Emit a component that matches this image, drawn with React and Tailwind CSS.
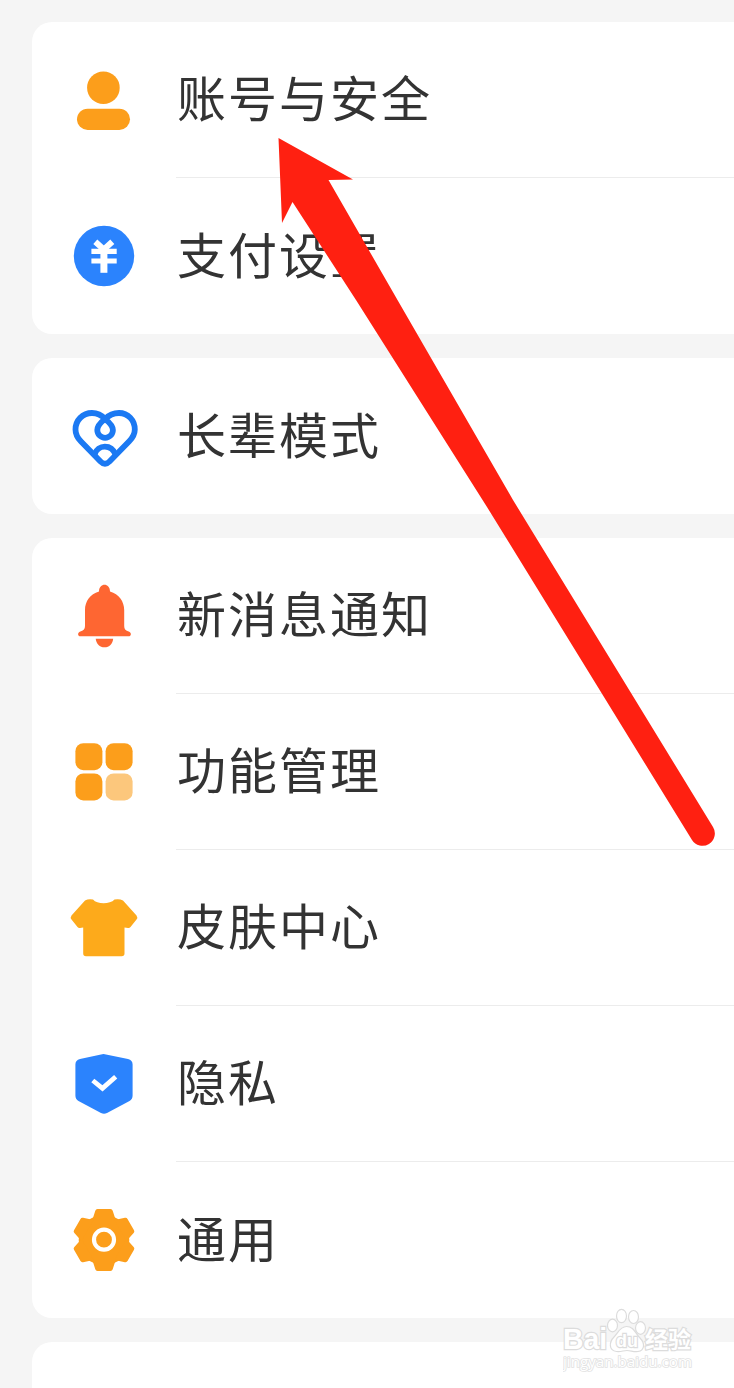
import React from 'react';

const UserIcon = () => (
  <svg viewBox="0 0 72 72" className="w-18 h-18 shrink-0" fill="#fc9e1b">
    <circle cx="35.4" cy="23.8" r="16.3" />
    <rect x="9" y="44.7" width="53" height="21.2" rx="10.6" />
  </svg>
);

const PayIcon = () => (
  <svg viewBox="0 0 72 72" className="w-18 h-18 shrink-0" fill="none">
    <circle cx="36" cy="36" r="30.2" fill="#2b83fd" />
    <path d="M27.3 21.8l8.500 7.700 8.500-7.700" stroke="#fff" strokeWidth="6" />
    <path d="M23.4 31.4h25.300M23.4 41h25.300" stroke="#fff" strokeWidth="5.2" />
    <path d="M35.9 27v25.8" stroke="#fff" strokeWidth="7" />
  </svg>
);

const HeartIcon = () => (
  <svg viewBox="0 0 72 72" className="w-18 h-18 shrink-0" fill="none" stroke="#1b79f3" strokeWidth="5.8" strokeLinecap="round" strokeLinejoin="round">
    <path d="M37 19C33 14.500 28.500 13 24 13C14.500 13 7.500 20.500 7.500 29.500C7.500 35 10 38.500 13 41.500L32.500 61.500Q37 66 41.500 61.500L61 41.500C64.500 38 66.800 34.500 66.800 29.500C66.800 20 60 13 51 13C46 13 41.500 14.500 37 19Z" />
    <path d="M37 19C32.500 22.500 29.300 26 29.300 30a7.800 7.800 0 0 0 15.600 0C44.900 26 41.500 22.500 37 19Z" />
    <path d="M26.500 54.500C30 44 43.500 44 47.500 54.500" />
  </svg>
);

const BellIcon = () => (
  <svg viewBox="0 0 72 72" className="w-18 h-18 shrink-0" fill="#fe6632">
    <path d="M31 11.500C31 2.500 42 2.500 42 11.500C51 14 56.200 21.500 56.200 30V46C56.200 49 57.500 50.500 60 51.200C64 52.300 63.500 56.300 60.500 56.300H12.500C9.500 56.300 9 52.300 13 51.200C15.500 50.500 17 49 17 46V30C17 21.500 22 14 31 11.500Z" />
    <path d="M27.700 58.700H45.200C44.500 64 41.500 67.300 36.500 67.300C31.500 67.300 28.400 64 27.700 58.700Z" />
  </svg>
);

const GridIcon = () => (
  <svg viewBox="0 0 72 72" className="w-18 h-18 shrink-0" fill="#fc9e1b">
    <rect x="7.400" y="7.200" width="27" height="27" rx="8" />
    <rect x="37.600" y="7.200" width="27" height="27" rx="8" />
    <rect x="7.400" y="37.400" width="27" height="27" rx="8" />
    <rect x="37.600" y="37.400" width="27" height="27" rx="8" fill="#fcc77c" />
  </svg>
);

const ShirtIcon = () => (
  <svg viewBox="0 0 72 72" className="w-18 h-18 shrink-0" fill="#fdaa1b">
    <path d="M17 8.500Q20.500 6.500 25 7.500C29 12.500 42 12.500 46.500 7.500Q51.500 6.500 55 8.500L68.500 23.500Q70 25.500 68.500 27.500L62.500 35Q61.500 36.200 60 35.900L56.500 35.500V61.500Q56.500 64.300 53.700 64.300H18Q15.200 64.300 15.200 61.500V35.500L12 35.900Q10.500 36.200 9.500 35L3.500 27.500Q2 25.500 3.500 23.500Z" />
  </svg>
);

const ShieldIcon = () => (
  <svg viewBox="0 0 72 72" className="w-18 h-18 shrink-0" fill="none">
    <path d="M33 6.500Q35.500 5.700 38 6.500L60 11Q64.600 12.300 64.600 16.500V47.500Q64.600 51 61.500 53L39 65Q36 66.500 33 65L10.500 53Q7.400 51 7.400 47.500V16.500Q7.400 12.300 12 11Z" fill="#2b83fd" />
    <path d="M24.800 32.500l9.700 7.900 13.200-11.600" stroke="#fff" strokeWidth="4.800" />
  </svg>
);

const TEETH = [0, 60, 120, 180, 240, 300];

const GearIcon = () => (
  <svg viewBox="0 0 72 72" className="w-18 h-18 shrink-0" fill="#fc9e1b">
    <circle cx="36" cy="36" r="25.300" />
    {TEETH.map((deg) => (
      <path key={deg} transform={`rotate(${deg} 36 36)`} d="M24 17L27.300 6.800Q27.800 5.100 29.500 5.100H42.500Q44.200 5.100 44.700 6.800L48 17Z" />
    ))}
    <circle cx="36" cy="35.700" r="10" fill="none" stroke="#fff" strokeWidth="4.200" />
  </svg>
);

const GROUPS = [
  [
    { label: '账号与安全', Icon: UserIcon },
    { label: '支付设置', Icon: PayIcon },
  ],
  [{ label: '长辈模式', Icon: HeartIcon }],
  [
    { label: '新消息通知', Icon: BellIcon },
    { label: '功能管理', Icon: GridIcon },
    { label: '皮肤中心', Icon: ShirtIcon },
    { label: '隐私', Icon: ShieldIcon },
    { label: '通用', Icon: GearIcon },
  ],
];

const SettingRow = ({ label, Icon, last }) => (
  <div className="flex items-center h-39 pl-9">
    <Icon />
    <div className={`flex items-center flex-1 h-full ml-9 pl-px pb-2 ${last ? '' : 'border-b border-[#ececec]'}`}>
      <span className="text-[49px] leading-none tracking-[2px] whitespace-nowrap text-[#333333]">{label}</span>
    </div>
  </div>
);

const Watermark = () => (
  <div className="absolute left-[563px] top-[1306px] w-[134px] h-[68px]">
    <svg viewBox="0 0 134 68" className="w-full h-full" fill="#fff" stroke="#dcdcdc" strokeWidth="1.200">
      <ellipse cx="49.500" cy="19.500" rx="5" ry="6.300" />
      <ellipse cx="58.500" cy="10" rx="5" ry="6.700" />
      <ellipse cx="70.500" cy="11" rx="5" ry="6.500" />
      <ellipse cx="77.500" cy="22" rx="5" ry="6.300" />
      <path d="M63.500 20.500C57 20.500 55 27 51 31C46 36 45.500 44.500 53.500 45.500C59 46 60 44.500 64 44.500C68 44.500 70 46 75 45.500C82 44.500 82 37 77 32C72 27 71 20.500 63.500 20.500Z" />
      <g fontFamily="'Liberation Sans', 'Noto Sans CJK SC', sans-serif" fontWeight="bold" paintOrder="stroke" strokeWidth="2.400">
        <text x="0" y="43" fontSize="29" textLength="44" lengthAdjust="spacingAndGlyphs">Bai</text>
        <text x="53" y="41" fontSize="19" textLength="22" lengthAdjust="spacingAndGlyphs">du</text>
        <text x="82" y="42" fontSize="23" textLength="46">经验</text>
      </g>
      <text x="0" y="61" fontSize="14" fontFamily="'Open Sans', sans-serif" textLength="129" lengthAdjust="spacingAndGlyphs" stroke="#e2e2e2" strokeWidth="1.600" paintOrder="stroke">jingyan.baidu.com</text>
    </svg>
  </div>
);

const App = () => {
  return (
    <div className="relative flex flex-col gap-6 w-full h-[1388px] overflow-hidden bg-[#f5f5f5] pt-[22px] pl-8 font-['Noto_Sans_CJK_SC',sans-serif]">
      {GROUPS.map((rows) => (
        <section key={rows[0].label} className="shrink-0 bg-white rounded-l-[20px]">
          {rows.map((row, i) => (
            <SettingRow key={row.label} {...row} last={i === rows.length - 1} />
          ))}
        </section>
      ))}
      <section className="shrink-0 h-39 bg-white rounded-l-[20px]" />

      <Watermark />

      {/* Pointer to the account row */}
      <svg viewBox="0 0 734 1388" className="absolute inset-0 w-full h-full pointer-events-none" fill="#ff2011">
        <path d="M278.500 138L353 179.500L328.500 180L397.500 300L513 500L713 827A12 12 0 0 1 692 840L487 507L356 300L292.500 202L282 223Z" />
      </svg>
    </div>
  );
};

export default App;
